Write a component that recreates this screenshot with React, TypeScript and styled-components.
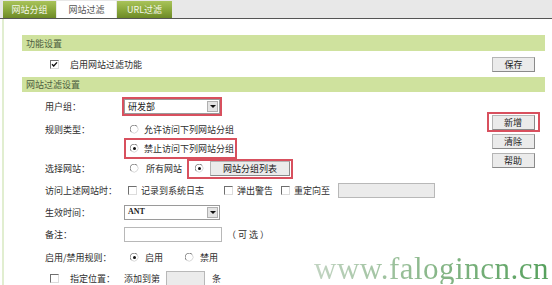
import React from 'react';
import styled, { createGlobalStyle } from 'styled-components';

const GlobalStyle = createGlobalStyle`
  html, body {
    margin: 0;
    padding: 0;
    background: #fff;
  }
  body {
    font-family: "Noto Sans CJK SC", "Noto Sans", sans-serif;
    font-size: 9px;
    color: #333;
  }
  * {
    box-sizing: border-box;
  }
`;

const Page = styled.div`
  position: relative;
  width: 552px;
  height: 285px;
  overflow: hidden;
`;

const TabBar = styled.div`
  display: flex;
  align-items: flex-end;
  gap: 1px;
  height: 19px;
  padding-left: 3px;
  background: #e8e8e8;
  border-bottom: 1px solid #555;
`;

interface TabProps {
  $active?: boolean;
  $width: number;
}

const Tab = styled.div<TabProps>`
  display: flex;
  align-items: center;
  justify-content: center;
  width: ${({ $width }) => $width}px;
  height: 17px;
  line-height: 1;
  font-size: 9px;
  color: ${({ $active }) => ($active ? '#555' : '#f4f7ea')};
  background: ${({ $active }) =>
    $active ? '#fff' : 'linear-gradient(to bottom, #a9c35a 0%, #8ba93d 50%, #6d8a27 100%)'};
`;

const Body = styled.div`
  margin-left: 2px;
  border-left: 2px solid #e1eed0;
  padding: 16px 7px 0 18px;
  height: 266px;
`;

interface HeaderProps {
  $height: number;
}

const SectionHeader = styled.div<HeaderProps>`
  display: flex;
  align-items: center;
  height: ${({ $height }) => $height}px;
  padding-left: 4px;
  background: #cfe29e;
  color: #4d5d40;
  line-height: 1;
`;

const EnableRow = styled.div`
  display: flex;
  align-items: center;
  height: 26px;
  padding-left: 28px;
  padding-right: 10px;
`;

const Text = styled.span<{ $ml?: number; $ls?: number }>`
  margin-left: ${({ $ml }) => $ml ?? 0}px;
  letter-spacing: ${({ $ls }) => $ls ?? 0}px;
  line-height: 1;
  white-space: nowrap;
  color: #2e2e2e;
`;

const Button = styled.button<{ $w?: number }>`
  width: ${({ $w }) => $w ?? 43}px;
  height: 15px;
  padding: 0;
  font-family: inherit;
  font-size: 9px;
  line-height: 1;
  color: #222;
  background: #ebebeb;
  border: 1px solid #8a8a8a;
  border-top-color: #b5b5b5;
  border-left-color: #b5b5b5;
`;

const SaveButton = styled(Button)`
  margin-left: auto;
`;

const FilterArea = styled.div`
  display: flex;
`;

const Form = styled.div`
  flex: 1;
  padding-left: 23px;
`;

const Row = styled.div<{ $h: number }>`
  display: flex;
  align-items: center;
  height: ${({ $h }) => $h}px;
`;

const Label = styled.div`
  display: flex;
  align-items: center;
  width: 77px;
  flex-shrink: 0;
  line-height: 1;
  color: #2e2e2e;
`;

const Field = styled.div<{ $ml?: number }>`
  display: flex;
  align-items: center;
  margin-left: ${({ $ml }) => $ml ?? 0}px;
`;

const RedBox = styled.div<{ $pl?: number; $pr?: number; $h?: number; $ml?: number }>`
  display: flex;
  align-items: center;
  height: ${({ $h }) => ($h ? `${$h}px` : 'auto')};
  margin-left: ${({ $ml }) => $ml ?? 0}px;
  padding-left: ${({ $pl }) => $pl ?? 0}px;
  padding-right: ${({ $pr }) => $pr ?? 0}px;
  border: 2px solid #d8505e;
`;

const SelectBox = styled.div<{ $w: number; $h: number }>`
  display: flex;
  align-items: center;
  justify-content: space-between;
  width: ${({ $w }) => $w}px;
  height: ${({ $h }) => $h}px;
  padding: 0 1px 0 3px;
  background: #fff;
  border: 1px solid #9a9a9a;
`;

const SelectValue = styled.span<{ $latin?: boolean }>`
  line-height: 1;
  font-size: ${({ $latin }) => ($latin ? '8px' : '9px')};
  font-weight: ${({ $latin }) => ($latin ? 700 : 400)};
  font-family: ${({ $latin }) =>
    $latin ? '"Liberation Serif", serif' : 'inherit'};
  color: #222;
`;

const ArrowButton = styled.span`
  display: flex;
  align-items: center;
  justify-content: center;
  width: 11px;
  height: 11px;
  background: #e4e4e4;
  border: 1px solid #b0b0b0;

  &::after {
    content: '';
    border-left: 3px solid transparent;
    border-right: 3px solid transparent;
    border-top: 3px solid #111;
  }
`;

const Input = styled.div<{ $w: number; $gray?: boolean }>`
  width: ${({ $w }) => $w}px;
  height: 15px;
  background: ${({ $gray }) => ($gray ? '#ebebeb' : '#fff')};
  border: 1px solid #b8b8b8;
`;

const CheckSquare = styled.span<{ $ml?: number }>`
  position: relative;
  display: inline-block;
  flex-shrink: 0;
  width: 9px;
  height: 9px;
  margin-left: ${({ $ml }) => $ml ?? 0}px;
  background: #fff;
  border-top: 1px solid #6f6f6f;
  border-left: 1px solid #6f6f6f;
  border-right: 1px solid #dcdcdc;
  border-bottom: 1px solid #dcdcdc;

  svg {
    position: absolute;
    left: 0;
    top: 0;
  }
`;

const SideColumn = styled.div`
  display: flex;
  flex-direction: column;
  align-items: center;
  width: 52px;
  margin-right: 6px;
  padding-top: 20px;
`;

const SideButton = styled(Button)<{ $mt?: number }>`
  margin-top: ${({ $mt }) => $mt ?? 0}px;
`;

const Watermark = styled.div`
  position: absolute;
  right: 3px;
  bottom: 1px;
  font-family: "Liberation Serif", serif;
  font-size: 31px;
  line-height: 1;
  letter-spacing: 0.5px;
  background: linear-gradient(to right, #c2d4c2 0%, #8fba8f 45%, #55a05c 100%);
  -webkit-background-clip: text;
  background-clip: text;
  color: transparent;
`;

const Radio = ({ checked, ml }: { checked?: boolean; ml?: number }) => (
  <svg
    width="9"
    height="9"
    viewBox="0 0 9 9"
    style={{ marginLeft: ml ?? 0, flexShrink: 0 }}
  >
    <circle cx="4.5" cy="4.5" r="4" fill="#fff" />
    <path d="M7.3 1.7 A4 4 0 1 0 1.7 7.3" fill="none" stroke="#7a7a7a" strokeWidth="1" />
    <path d="M7.3 1.7 A4 4 0 0 1 1.7 7.3" fill="none" stroke="#d8d8d8" strokeWidth="1" />
    {checked && <circle cx="4.5" cy="4.5" r="1.5" fill="#111" />}
  </svg>
);

const Checkbox = ({ checked, ml }: { checked?: boolean; ml?: number }) => (
  <CheckSquare $ml={ml}>
    {checked && (
      <svg width="7" height="7" viewBox="0 0 7 7">
        <path d="M1 3.3 L2.7 5 L6 1.4" fill="none" stroke="#111" strokeWidth="1.4" />
      </svg>
    )}
  </CheckSquare>
);

const Select = ({ value, w, h, latin }: { value: string; w: number; h: number; latin?: boolean }) => (
  <SelectBox $w={w} $h={h}>
    <SelectValue $latin={latin}>{value}</SelectValue>
    <ArrowButton />
  </SelectBox>
);

export default function App() {
  return (
    <Page>
      <GlobalStyle />
      <TabBar>
        <Tab $width={53}>网站分组</Tab>
        <Tab $width={59} $active>网站过滤</Tab>
        <Tab $width={55}>URL过滤</Tab>
      </TabBar>
      <Body>
        <SectionHeader $height={16}>功能设置</SectionHeader>
        <EnableRow>
          <Checkbox checked />
          <Text $ml={11}>启用网站过滤功能</Text>
          <SaveButton>保存</SaveButton>
        </EnableRow>
        <SectionHeader $height={15}>网站过滤设置</SectionHeader>
        <FilterArea>
          <Form>
            <Row $h={28}>
              <Label>用户组：</Label>
              <RedBox $h={19}>
                <Select value="研发部" w={96} h={15} />
              </RedBox>
            </Row>
            <Row $h={19}>
              <Label>规则类型：</Label>
              <Field $ml={8}>
                <Radio />
                <Text $ml={5}>允许访问下列网站分组</Text>
              </Field>
            </Row>
            <Row $h={19}>
              <Label />
              <RedBox $h={21} $ml={2} $pl={4} $pr={1}>
                <Radio checked />
                <Text $ml={5}>禁止访问下列网站分组</Text>
              </RedBox>
            </Row>
            <Row $h={21}>
              <Label>选择网站：</Label>
              <Field $ml={8}>
                <Radio />
                <Text $ml={7}>所有网站</Text>
              </Field>
              <RedBox $h={20} $ml={5} $pl={6} $pr={1}>
                <Radio checked />
                <Button $w={80} style={{ marginLeft: 6 }}>网站分组列表</Button>
              </RedBox>
            </Row>
            <Row $h={22}>
              <Label>访问上述网站时：</Label>
              <Field $ml={6}>
                <Checkbox />
                <Text $ml={4}>记录到系统日志</Text>
                <Checkbox ml={20} />
                <Text $ml={4}>弹出警告</Text>
                <Checkbox ml={8} />
                <Text $ml={4}>重定向至</Text>
                <Field $ml={8}>
                  <Input $w={97} $gray />
                </Field>
              </Field>
            </Row>
            <Row $h={22}>
              <Label>生效时间：</Label>
              <Field $ml={2}>
                <Select value="ANT" w={96} h={15} latin />
              </Field>
            </Row>
            <Row $h={23}>
              <Label>备注：</Label>
              <Field $ml={2}>
                <Input $w={98} />
                <Text $ml={5} $ls={2}>（可选）</Text>
              </Field>
            </Row>
            <Row $h={23}>
              <Label>启用/禁用规则：</Label>
              <Field $ml={8}>
                <Radio checked />
                <Text $ml={6}>启用</Text>
                <Radio ml={22} />
                <Text $ml={6}>禁用</Text>
              </Field>
            </Row>
            <Row $h={18}>
              <Label>
                <Checkbox ml={5} />
                <Text $ml={11}>指定位置：</Text>
              </Label>
              <Field $ml={2}>
                <Text>添加到第</Text>
                <Field $ml={6}>
                  <Input $w={39} $gray />
                </Field>
                <Text $ml={7}>条</Text>
              </Field>
            </Row>
          </Form>
          <SideColumn>
            <RedBox $h={20} $pl={3} $pr={3}>
              <Button>新增</Button>
            </RedBox>
            <SideButton $mt={2}>清除</SideButton>
            <SideButton $mt={4}>帮助</SideButton>
          </SideColumn>
        </FilterArea>
      </Body>
      <Watermark>www.falogincn.cn</Watermark>
    </Page>
  );
}
